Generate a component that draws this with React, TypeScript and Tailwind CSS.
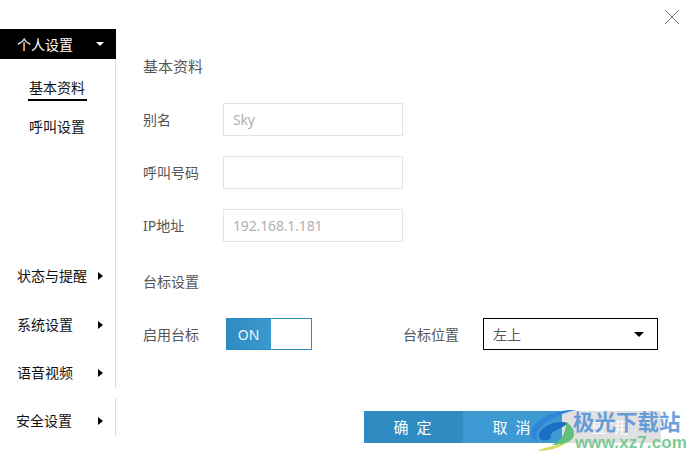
const FONT = "font-['Noto_Sans','Noto_Sans_CJK_SC',sans-serif]";

function CaretRight() {
  return <span className="ml-auto mr-[12px] h-0 w-0 border-y-[4px] border-l-[5px] border-y-transparent border-l-black" />;
}

function SideItem({ label, className }: { label: string; className: string }) {
  return (
    <div className={`flex items-center text-[14px] leading-[20px] text-[#111] ${className}`}>
      <span>{label}</span>
      <CaretRight />
    </div>
  );
}

function Sidebar() {
  return (
    <aside className="w-[116px] shrink-0 pt-[29px]">
      <div className="flex h-[30px] items-center bg-black pl-[17px] text-[14px] text-white">
        <span>个人设置</span>
        <span className="ml-[23px] h-0 w-0 border-x-[4px] border-t-[4px] border-x-transparent border-t-white" />
      </div>
      <div className="h-[329px] border-r border-[#d9d9d9] pt-[19px]">
        <div className="ml-[28px] w-[59px] border-b-2 border-black pb-[1px] pl-[1px] text-[14px] leading-[20px] text-[#111]">
          基本资料
        </div>
        <div className="ml-[29px] mt-[16px] text-[14px] leading-[20px] text-[#111]">呼叫设置</div>
        <SideItem label="状态与提醒" className="mt-[129px] pl-[17px]" />
        <SideItem label="系统设置" className="mt-[29px] pl-[17px]" />
        <SideItem label="语音视频" className="mt-[28px] pl-[17px]" />
      </div>
      <div className="mt-[10px] h-[38px] border-r border-[#d9d9d9] pt-[13px]">
        <SideItem label="安全设置" className="pl-[16px]" />
      </div>
    </aside>
  );
}

function Field({ label, value }: { label: string; value?: string }) {
  return (
    <div className="flex h-[33px] items-center">
      <label className="w-[80px] text-[14px] text-[#555]">{label}</label>
      <div className="flex h-[33px] w-[180px] items-center border border-[#e4e4e4] pl-[9px] text-[14px] tracking-[-0.15px] text-[#b4b0b0]">
        {value}
      </div>
    </div>
  );
}

function Content() {
  return (
    <main className="flex-1 pl-[27px] pt-[55px]">
      <h2 className="text-[15px] font-normal leading-[22px] text-[#555]">基本资料</h2>
      <div className="mt-[26px] flex flex-col gap-[20px]">
        <Field label="别名" value="Sky" />
        <Field label="呼叫号码" />
        <Field label="IP地址" value="192.168.1.181" />
      </div>
      <h2 className="mt-[29px] text-[14px] font-normal leading-[22px] text-[#555]">台标设置</h2>
      <div className="mt-[25px] flex items-center">
        <span className="w-[83px] text-[14px] text-[#555]">启用台标</span>
        <div className="flex h-[32px] w-[86px] border border-[#2e8cc2]">
          <div className="flex w-[44px] items-center justify-center bg-gradient-to-r from-[#2e8bc0] to-[#3d9ad0] pr-[1px] text-[14px] text-[#eef6fb]">
            ON
          </div>
        </div>
        <span className="ml-[91px] w-[80px] text-[14px] text-[#555]">台标位置</span>
        <div className="flex h-[32px] w-[175px] items-center border border-black pl-[9px] pr-[13px] text-[14px] text-[#555]">
          <span>左上</span>
          <span className="ml-auto h-0 w-0 border-x-[5px] border-t-[5px] border-x-transparent border-t-black" />
        </div>
      </div>
      <div className="ml-[221px] mt-[61px] flex text-[15px] tracking-[8px]">
        <button type="button" className="h-[32px] w-[99px] bg-[#2e8cc2] pl-[6px] text-white">确定</button>
        <button type="button" className="h-[32px] w-[99px] bg-[#3c99d2] pl-[6px] text-white">取消</button>
        <button type="button" className="h-[32px] w-[99px] bg-[#e0e0e0] pl-[6px] text-white">应用</button>
      </div>
    </main>
  );
}

function Watermark() {
  return (
    <div className="pointer-events-none absolute left-[530px] top-[408px] flex">
      <svg width="46" height="43" viewBox="0 0 46 43" fill="none">
        <path d="M46 2 C30 1 10 8 3 19 C-1 26 1 32 8 34 C5 30 6 24 11 19 C19 11 32 5 46 2Z" fill="#2f86d8" />
        <path d="M38 15 C27 12 15 17 10 24 C7 30 11 34 18 32 C23 30 19 27 23 24 C27 21 33 20 38 15Z" fill="#1c6fc4" />
        <path d="M36 14 C43 18 46 25 43 30 C39 35 32 37 22 37 C30 33 36 27 36 14Z" fill="#5fc07a" />
        <path d="M38 34 C30 40 18 43 8 43 C12 39 28 38 38 34Z" fill="#d9d860" />
      </svg>
      <div className="ml-[-3px] flex flex-col items-start">
        <span className="font-['Noto_Sans_CJK_SC'] text-[21.5px] font-bold leading-[25px] text-[#4f8fd6]/85">极光下载站</span>
        <span className="mt-[1px] ml-[2px] font-['Liberation_Sans'] text-[17px] font-bold leading-[18px] tracking-[0.1px] text-[#6cc487]/90">www.xz7.com</span>
      </div>
    </div>
  );
}

export default function App() {
  return (
    <div className={`relative flex h-[460px] w-[690px] overflow-hidden bg-white ${FONT}`}>
      <Sidebar />
      <Content />
      <svg className="absolute left-[664px] top-[9px]" width="16" height="16" viewBox="0 0 16 16" stroke="#777" strokeWidth="1">
        <path d="M1 1 L15 15 M15 1 L1 15" />
      </svg>
      <Watermark />
    </div>
  );
}
